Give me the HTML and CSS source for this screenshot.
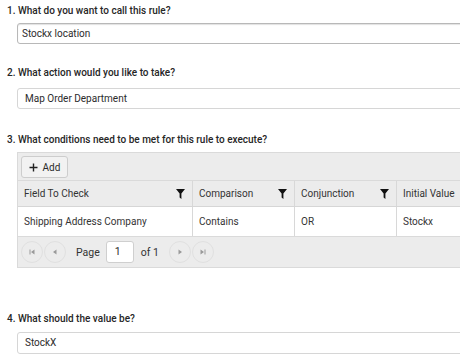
FILE: index.html
```html
<!DOCTYPE html>
<html>
<head>
<meta charset="utf-8">
<link rel="stylesheet" href="styles.css">
</head>
<body>
<div class="page">
  <div class="q q1">
    <div class="label">1. What do you want to call this rule?</div>
    <div class="input focused">Stockx location</div>
  </div>
  <div class="q q2">
    <div class="label">2. What action would you like to take?</div>
    <div class="input">Map Order Department</div>
  </div>
  <div class="q q3">
    <div class="label">3. What conditions need to be met for this rule to execute?</div>
    <div class="grid">
      <div class="toolbar">
        <button class="btn"><svg width="9" height="9" viewBox="0 0 9 9"><path d="M4.5 0.5v8M0.5 4.5h8" stroke="#222" stroke-width="1.4"/></svg><span>Add</span></button>
      </div>
      <div class="row head">
        <div class="cell c1">Field To Check<svg class="filter" viewBox="0 0 10 11"><path d="M0 0h10L6 5v6L4 9.5V5z" fill="#111"/></svg></div>
        <div class="cell c2">Comparison<svg class="filter" viewBox="0 0 10 11"><path d="M0 0h10L6 5v6L4 9.5V5z" fill="#111"/></svg></div>
        <div class="cell c3">Conjunction<svg class="filter" viewBox="0 0 10 11"><path d="M0 0h10L6 5v6L4 9.5V5z" fill="#111"/></svg></div>
        <div class="cell c4">Initial Value</div>
      </div>
      <div class="row body">
        <div class="cell c1">Shipping Address Company</div>
        <div class="cell c2">Contains</div>
        <div class="cell c3">OR</div>
        <div class="cell c4">Stockx</div>
      </div>
      <div class="pager">
        <span class="pbtn"><svg viewBox="0 0 8 8"><path d="M1.5 1.5h1v5h-1zM6.5 1.5v5L3 4z" fill="#9a9a9a"/></svg></span>
        <span class="pbtn"><svg viewBox="0 0 8 8"><path d="M5.5 1.5v5L2 4z" fill="#9a9a9a"/></svg></span>
        <span class="ptext">Page</span>
        <span class="pinput">1</span>
        <span class="ptext of">of 1</span>
        <span class="pbtn next"><svg viewBox="0 0 8 8"><path d="M2.5 1.5v5L6 4z" fill="#9a9a9a"/></svg></span>
        <span class="pbtn"><svg viewBox="0 0 8 8"><path d="M1.5 1.5v5L5 4zM5.5 1.5h1v5h-1z" fill="#9a9a9a"/></svg></span>
      </div>
    </div>
  </div>
  <div class="q q4">
    <div class="label">4. What should the value be?</div>
    <div class="input">StockX</div>
  </div>
</div>
</body>
</html>
```
FILE: styles.css
```css
html, body {
  margin: 0;
  padding: 0;
  overflow: hidden;
  background: #fff;
}
body {
  font-family: Roboto, "Liberation Sans", sans-serif;
  font-size: 10px;
  color: #2b2b2b;
  width: 460px;
  height: 356px;
}
.page {
  width: 540px;
  padding: 4px 0 0 7px;
  display: flex;
  flex-direction: column;
}
.label {
  line-height: 14px;
  font-weight: 500;
  color: #262626;
  font-size: 10px;
}
.input {
  margin: 5px 0 0 10px;
  height: 19px;
  line-height: 19px;
  border: 1px solid #d6d6d6;
  border-radius: 3px;
  padding: 0 7px;
  font-size: 10px;
  color: #2b2b2b;
}
.input.focused {
  border-color: #b8b8b8;
  box-shadow: inset 0 1px 1px rgba(0,0,0,0.12);
  padding-left: 4px;
}
.q2 { margin-top: 22px; }
.q2 .input { margin-top: 8px; }
.q3 { margin-top: 24px; }
.q4 { margin-top: 44px; }
.q4 .input { margin-top: 6px; height: 20px; }

.grid {
  margin: 5px 0 0 10px;
  border: 1px solid #dadada;
  background: #ececec;
}
.toolbar {
  height: 28px;
  padding: 3px 3px;
  box-sizing: border-box;
  border-bottom: 1px solid #dadada;
  display: flex;
  align-items: flex-start;
}
.btn {
  height: 22px;
  width: 47px;
  border: 1px solid #cdcdcd;
  border-radius: 3px;
  background: #f2f2f2;
  font-family: inherit;
  font-size: 10px;
  color: #2b2b2b;
  display: flex;
  align-items: center;
  justify-content: center;
  gap: 5px;
  padding: 0;
}
.row {
  display: flex;
}
.head {
  height: 25px;
  background: #ececec;
  border-bottom: 1px solid #d6d6d6;
}
.body {
  height: 29px;
  background: #fff;
  border-bottom: 1px solid #dadada;
}
.cell {
  display: flex;
  align-items: center;
  justify-content: space-between;
  padding: 0 7px 0 6px;
  border-left: 1px solid #d8d8d8;
  box-sizing: border-box;
  font-size: 10px;
  color: #333;
}
.cell.c1 { width: 174px; border-left: none; }
.cell.c2 { width: 102px; }
.cell.c3 { width: 102px; }
.cell.c4 { flex: 1; }
.filter {
  width: 9px;
  height: 10px;
}
.pager {
  height: 30px;
  display: flex;
  align-items: center;
  padding: 0 3px;
}
.pbtn {
  width: 22px;
  height: 22px;
  box-sizing: border-box;
  border-radius: 50%;
  border: 1px solid #e0e0e0;
  display: flex;
  align-items: center;
  justify-content: center;
  margin-right: 1px;
}
.pbtn svg { width: 8px; height: 8px; }
.pbtn.next { margin-left: 10px; }
.ptext {
  font-size: 10.5px;
  color: #333;
  margin-left: 9px;
}
.pinput {
  width: 28px;
  height: 22px;
  box-sizing: border-box;
  background: #fff;
  border: 1px solid #cfcfcf;
  border-radius: 3px;
  margin-left: 6px;
  padding-left: 8px;
  line-height: 20px;
  font-size: 10.5px;
}
.ptext.of { margin-left: 7px; }
```
